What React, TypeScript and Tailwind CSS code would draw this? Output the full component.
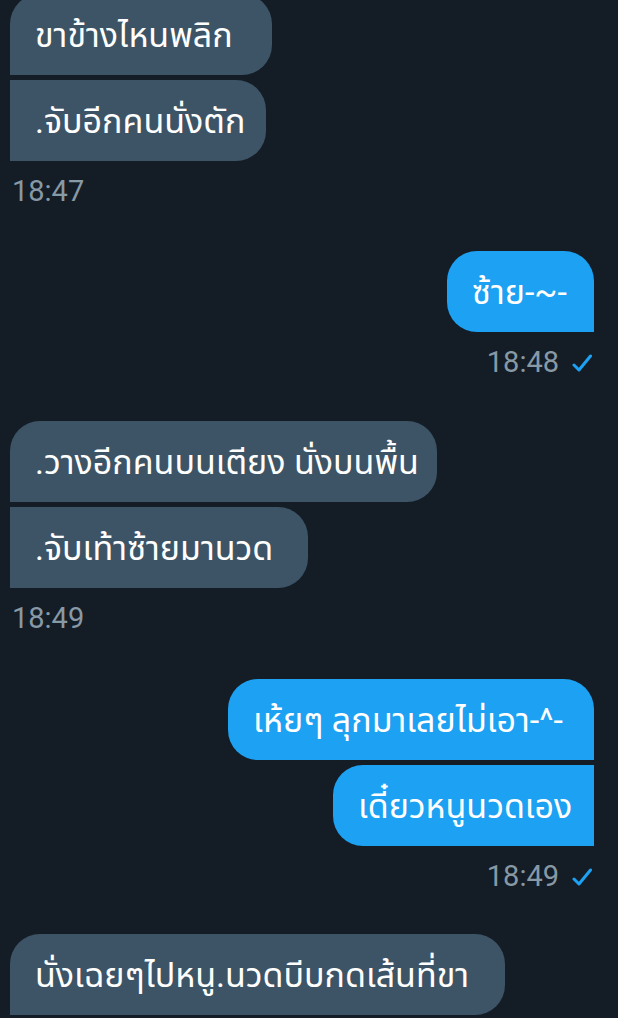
const font = { fontFamily: 'Roboto, "Noto Sans Thai", "Noto Sans", sans-serif' };

type Msg = { text: string; w: string; first?: boolean };

function Check() {
  return (
    <svg width="20" height="20" viewBox="0 0 20 20" fill="none" aria-hidden="true">
      <path d="M2 12 L7 17 L18.5 3" stroke="#1da1f2" strokeWidth="3" strokeLinecap="round" strokeLinejoin="round" />
    </svg>
  );
}

function Received({ msgs, time, className = "" }: { msgs: Msg[]; time?: string; className?: string }) {
  return (
    <div className={`flex flex-col items-start ${className}`}>
      <div className="flex flex-col items-start gap-[5px]">
        {msgs.map((m, i) => (
          <div
            key={i}
            className={`flex h-[81px] items-center bg-[#3d5466] px-[25px] text-[34px] text-white rounded-r-[30px] rounded-bl-none ${m.w} ${
              m.first ? "rounded-tl-[30px]" : "rounded-tl-none"
            }`}
          >
            <span className="leading-none whitespace-nowrap">{m.text}</span>
          </div>
        ))}
      </div>
      {time && (
        <div className="mt-4 ml-[2px] text-[29px] leading-none text-[#8899a6]">{time}</div>
      )}
    </div>
  );
}

function Sent({ msgs, time, className = "" }: { msgs: Msg[]; time: string; className?: string }) {
  return (
    <div className={`flex flex-col items-end ${className}`}>
      <div className="flex flex-col items-end gap-[5px]">
        {msgs.map((m, i) => (
          <div
            key={i}
            className={`flex h-[81px] items-center bg-[#1da1f2] px-[25px] text-[34px] text-white rounded-l-[30px] rounded-br-none ${m.w} ${
              m.first ? "rounded-tr-[30px]" : "rounded-tr-none"
            }`}
          >
            <span className="leading-none whitespace-nowrap">{m.text}</span>
          </div>
        ))}
      </div>
      <div className="mt-4 mr-[2px] flex items-center gap-[13px] text-[29px] leading-none text-[#8899a6]">
        <span>{time}</span>
        <Check />
      </div>
    </div>
  );
}

export default function App() {
  return (
    <div className="h-[1018px] w-full overflow-hidden bg-[#141d26] px-[10px] pr-6" style={font}>
      <div className="-mt-[6px] flex flex-col">
        <Received
          msgs={[
            { text: "ขาข้างไหนพลิก", w: "w-[262px]", first: true },
            { text: ".จับอีกคนนั่งตัก", w: "w-[256px]" },
          ]}
          time="18:47"
        />
        <Sent className="mt-[45px]" msgs={[{ text: "ซ้าย-~-", w: "w-[147px]", first: true }]} time="18:48" />
        <Received
          className="mt-[44px]"
          msgs={[
            { text: ".วางอีกคนบนเตียง นั่งบนพื้น", w: "w-[427px]", first: true },
            { text: ".จับเท้าซ้ายมานวด", w: "w-[298px]" },
          ]}
          time="18:49"
        />
        <Sent
          className="mt-[46px]"
          msgs={[
            { text: "เห้ยๆ ลุกมาเลยไม่เอา-^-", w: "w-[366px]", first: true },
            { text: "เดี๋ยวหนูนวดเอง", w: "w-[261px]" },
          ]}
          time="18:49"
        />
        <Received
          className="mt-[43px]"
          msgs={[{ text: "นั่งเฉยๆไปหนู.นวดบีบกดเส้นที่ขา", w: "w-[495px]", first: true }]}
        />
      </div>
    </div>
  );
}
